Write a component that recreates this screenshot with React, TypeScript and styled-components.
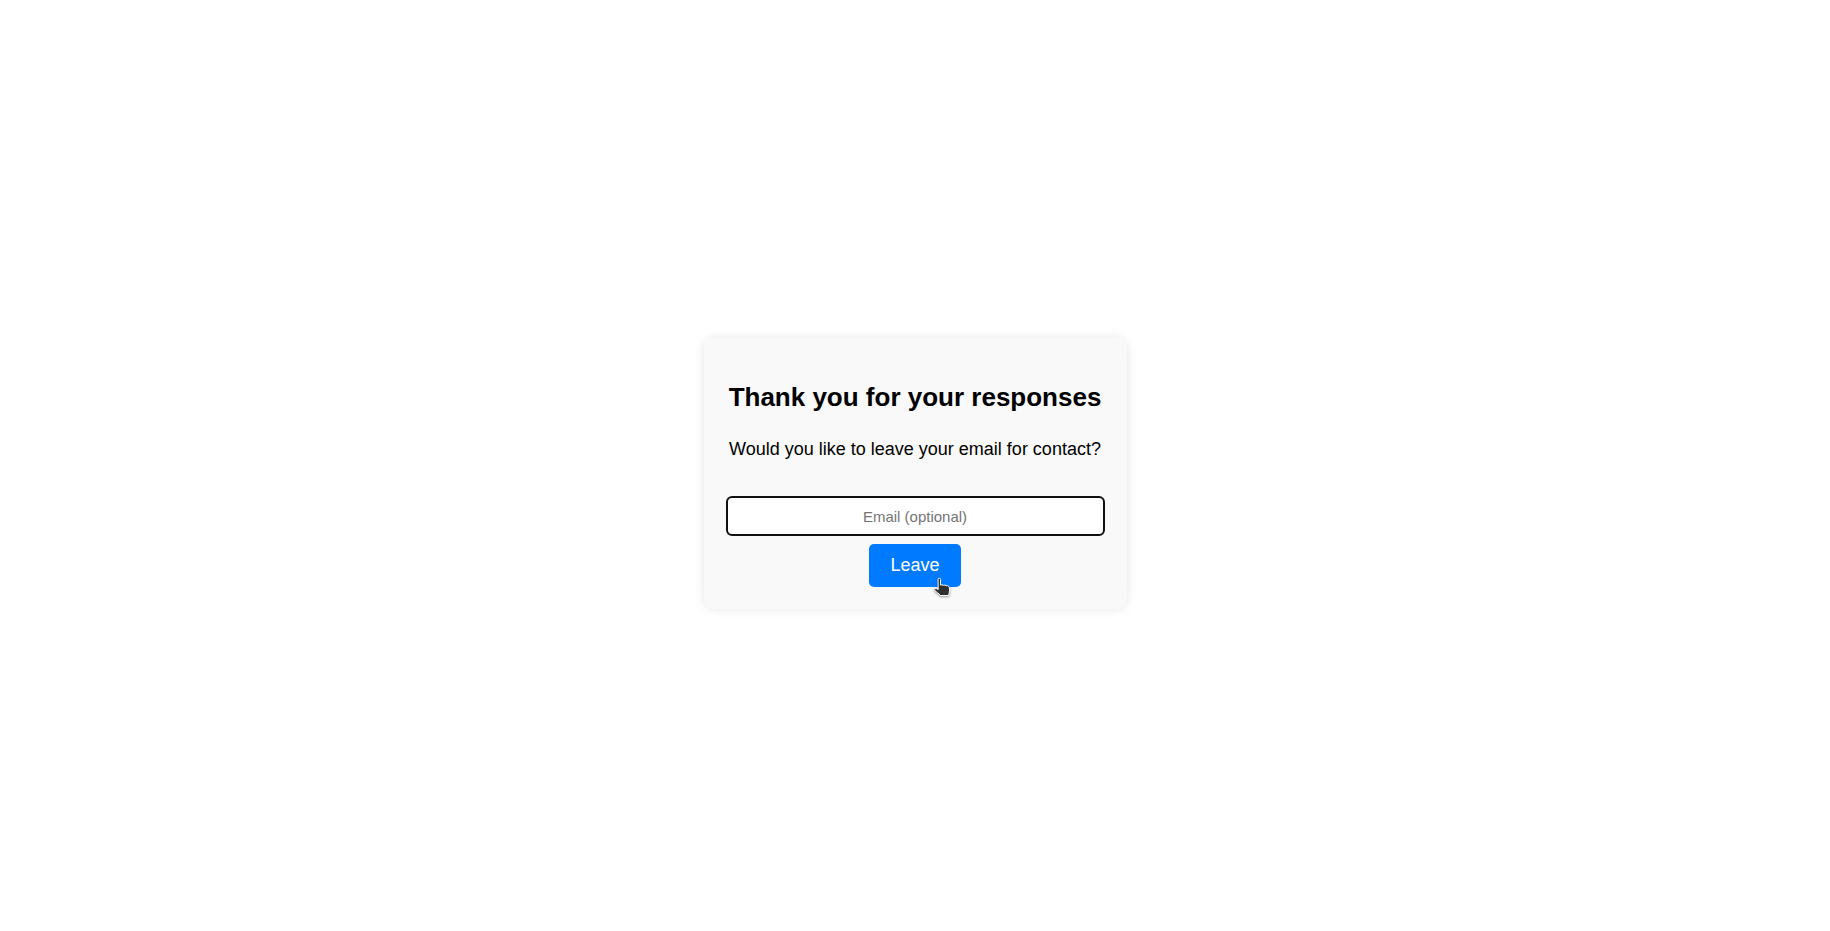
import React from "react";
import styled, { createGlobalStyle } from "styled-components";

const GlobalStyle = createGlobalStyle`
  body {
    margin: 0;
    background: #fff;
    color: #000;
    font-family: "Liberation Sans", Arial, sans-serif;
  }
`;

const Page = styled.main`
  box-sizing: border-box;
  display: flex;
  align-items: center;
  justify-content: center;
  min-height: 100vh;
  padding-top: 16px;
`;

const Card = styled.form`
  box-sizing: border-box;
  display: flex;
  flex-direction: column;
  align-items: center;
  width: 100%;
  max-width: 423px;
  padding: 22px;
  border-radius: 11px;
  background: #f9f9f9;
  box-shadow: 0 0 11px rgba(0, 0, 0, 0.1);
  text-align: center;
`;

const Title = styled.h1`
  margin: 22px 0 26px;
  font-size: 26px;
  line-height: 30px;
`;

const Prompt = styled.label`
  margin-bottom: 36px;
  font-size: 18px;
  line-height: 22px;
`;

const EmailInput = styled.input`
  box-sizing: border-box;
  width: 100%;
  height: 40px;
  padding: 0 10px;
  border: 2px solid #101010;
  border-radius: 6px;
  outline: none;
  background: #fff;
  font: 15px "Liberation Sans", Arial, sans-serif;
  text-align: center;
  &::placeholder { color: #757575; }
`;

const SubmitArea = styled.div`
  position: relative;
  margin-top: 8px;
`;

const LeaveButton = styled.button`
  display: block;
  height: 43px;
  padding: 0 21px;
  border: 0;
  border-radius: 5px;
  background: #007bff;
  color: #fff;
  font: 18px "Liberation Sans", Arial, sans-serif;
  cursor: pointer;
`;

const Pointer = styled.svg`
  position: absolute;
  right: 10px;
  bottom: -10px;
  overflow: visible;
  filter: drop-shadow(0 1px 1px rgba(0, 0, 0, 0.4));
  pointer-events: none;
`;

export default function App() {
  return (
    <>
      <GlobalStyle />
      <Page>
        <Card onSubmit={(e) => e.preventDefault()}>
          <Title>Thank you for your responses</Title>
          <Prompt htmlFor="email">Would you like to leave your email for contact?</Prompt>
          <EmailInput id="email" type="email" placeholder="Email (optional)" />
          <SubmitArea>
            <LeaveButton type="submit">Leave</LeaveButton>
            <Pointer width="18" height="20" viewBox="0 0 18 20" aria-hidden="true">
              <path
                d="M5 2.5Q5 1.200 6.300 1.200T7.600 2.500V8.200Q9 7.200 10.500 8.300Q12 7.500 13.200 8.700Q14.500 8.200 15.800 9.500Q16.500 10 16.500 12V14Q16.300 16 15.500 18.500H7.200Q6.500 17 4.500 15.800L1.800 13.600Q.8 12.200 2 11.600Q3.500 11.200 5.200 12.600Z"
                fill="#303030"
                stroke="#fff"
              />
            </Pointer>
          </SubmitArea>
        </Card>
      </Page>
    </>
  );
}
